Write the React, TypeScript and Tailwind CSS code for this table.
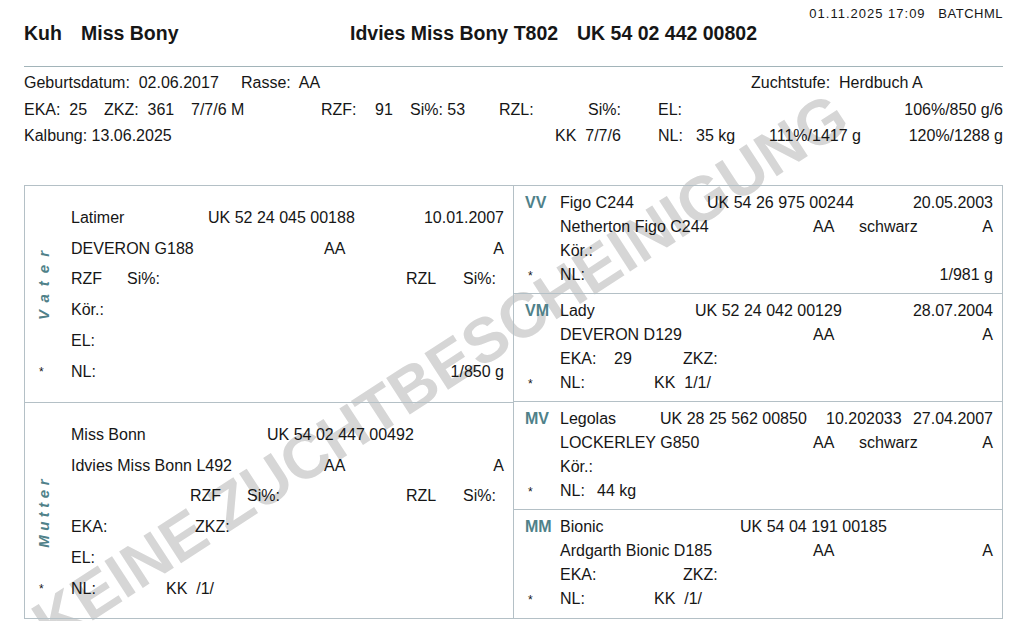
import React from "react";

const line = "border-[#b4c0c6]";

const SideLabel = ({ text, className }: { text: string; className: string }) => (
    <div className="row-span-4 row-start-2 flex items-center justify-center pr-[8px]">
        <span
            className={`[writing-mode:vertical-rl] rotate-180 font-bold italic text-[15px] text-[#4f8189] ${className}`}
        >
            {text}
        </span>
    </div>
);

const ParentBox = ({
    label,
    labelClass,
    rows,
}: {
    label: string;
    labelClass: string;
    rows: React.ReactNode[];
}) => (
    <div className="grid h-[216px] grid-cols-[46px_433px] auto-rows-[30.8px] pt-[17px]">
        <SideLabel text={label} className={labelClass} />
        {rows.map((row, i) => (
            <React.Fragment key={i}>
                {i === 5 && (
                    <div className="col-start-1 row-start-6 flex items-center pl-[14px] text-[12px]">*</div>
                )}
                <div
                    className="col-start-2 flex items-center"
                    style={{ gridRowStart: i + 1 }}
                >
                    {row}
                </div>
            </React.Fragment>
        ))}
    </div>
);

const AncestorBox = ({
    code,
    rows,
    last,
}: {
    code: string;
    rows: React.ReactNode[];
    last?: boolean;
}) => (
    <div className={`h-[108px] pt-[6px] ${last ? "" : `border-b ${line}`}`}>
        {rows.map((row, i) => (
            <div key={i} className="flex h-[23.8px] items-center">
                <div className="w-[46px] pl-[11px]">
                    {i === 0 ? (
                        <span className="font-bold text-[#4f8189]">{code}</span>
                    ) : i === 3 ? (
                        <span className="pl-[3px] text-[12px]">*</span>
                    ) : null}
                </div>
                <div className="flex w-[433px] items-center">{row}</div>
            </div>
        ))}
    </div>
);

export default function App() {
    return (
        <div className="relative h-[621px] w-[1024px] overflow-hidden bg-white pl-[24px] pr-[21px] font-['Liberation_Sans',Arial,sans-serif] text-[16px] text-[#161616] whitespace-pre">
            <div className="pointer-events-none absolute left-[440px] top-[369px] -translate-x-1/2 -translate-y-1/2 -rotate-[33deg] text-[63px] font-bold text-[#d6d6d6]">
                KEINE ZUCHTBESCHEINIGUNG
            </div>

            <div className="relative">
                {/* header */}
                <div className="flex h-[23px] items-end justify-end text-[13px] tracking-[1px]">
                    <span className="w-[129px]">01.11.2025 17:09</span>
                    <span className="tracking-[0.5px]">BATCHML</span>
                </div>
                <div className="flex h-[22px] items-center text-[19.5px] font-bold">
                    <span className="w-[57px]">Kuh</span>
                    <span className="w-[269px]">Miss Bony</span>
                    <span className="w-[227px]">Idvies Miss Bony T802</span>
                    <span>UK 54 02 442 00802</span>
                </div>
                <div className="mt-[21px] border-t border-[#a2b4b9]" />

                {/* info rows */}
                <div className="mt-[3px]">
                    <div className="flex h-[26.5px] items-center">
                        <span className="w-[217px]">Geburtsdatum:  02.06.2017</span>
                        <span className="w-[510px]">Rasse:  AA</span>
                        <span>Zuchtstufe:  Herdbuch A</span>
                    </div>
                    <div className="flex h-[26.5px] items-center">
                        <span className="w-[80px]">EKA:  25</span>
                        <span className="w-[87px]">ZKZ:  361</span>
                        <span className="w-[130px]">7/7/6 M</span>
                        <span className="w-[54px]">RZF:</span>
                        <span className="w-[35px]">91</span>
                        <span className="w-[89px]">Si%: 53</span>
                        <span className="flex w-[122px] justify-between">
                            <span>RZL:</span>
                            <span>Si%:</span>
                        </span>
                        <span className="w-[37px]" />
                        <span>EL:</span>
                        <span className="ml-auto">106%/850 g/6</span>
                    </div>
                    <div className="flex h-[26.5px] items-center">
                        <span className="w-[531px]">Kalbung: 13.06.2025</span>
                        <span className="w-[103px]">KK  7/7/6</span>
                        <span className="w-[38px]">NL:</span>
                        <span className="w-[73px]">35 kg</span>
                        <span>111%/1417 g</span>
                        <span className="ml-auto">120%/1288 g</span>
                    </div>
                </div>

                {/* pedigree */}
                <div className={`mt-[35px] flex h-[434px] border ${line}`}>
                    <div className={`w-[490px] border-r ${line}`}>
                        <div className={`border-b ${line}`}>
                            <ParentBox
                                label="Vater"
                                labelClass="tracking-[8px] -translate-y-[13px]"
                                rows={[
                                    <>
                                        <span className="w-[137px]">Latimer</span>
                                        <span>UK 52 24 045 00188</span>
                                        <span className="ml-auto">10.01.2007</span>
                                    </>,
                                    <>
                                        <span className="w-[253px]">DEVERON G188</span>
                                        <span>AA</span>
                                        <span className="ml-auto">A</span>
                                    </>,
                                    <>
                                        <span className="w-[56px]">RZF</span>
                                        <span className="w-[279px]">Si%:</span>
                                        <span className="w-[57px]">RZL</span>
                                        <span>Si%:</span>
                                    </>,
                                    <span>Kör.:</span>,
                                    <span>EL:</span>,
                                    <>
                                        <span>NL:</span>
                                        <span className="ml-auto">1/850 g</span>
                                    </>,
                                ]}
                            />
                        </div>
                        <ParentBox
                            label="Mutter"
                            labelClass="tracking-[4.5px]"
                            rows={[
                                <>
                                    <span className="w-[196px]">Miss Bonn</span>
                                    <span>UK 54 02 447 00492</span>
                                </>,
                                <>
                                    <span className="w-[253px]">Idvies Miss Bonn L492</span>
                                    <span>AA</span>
                                    <span className="ml-auto">A</span>
                                </>,
                                <>
                                    <span className="w-[119px]" />
                                    <span className="w-[57px]">RZF</span>
                                    <span className="w-[159px]">Si%:</span>
                                    <span className="w-[57px]">RZL</span>
                                    <span>Si%:</span>
                                </>,
                                <>
                                    <span className="w-[124px]">EKA:</span>
                                    <span>ZKZ:</span>
                                </>,
                                <span>EL:</span>,
                                <>
                                    <span className="w-[95px]">NL:</span>
                                    <span>KK  /1/</span>
                                </>,
                            ]}
                        />
                    </div>

                    <div className="w-[489px]">
                        <AncestorBox
                            code="VV"
                            rows={[
                                <>
                                    <span className="w-[147px]">Figo C244</span>
                                    <span>UK 54 26 975 00244</span>
                                    <span className="ml-auto">20.05.2003</span>
                                </>,
                                <>
                                    <span className="w-[253px]">Netherton Figo C244</span>
                                    <span className="w-[46px]">AA</span>
                                    <span>schwarz</span>
                                    <span className="ml-auto">A</span>
                                </>,
                                <span>Kör.:</span>,
                                <>
                                    <span>NL:</span>
                                    <span className="ml-auto">1/981 g</span>
                                </>,
                            ]}
                        />
                        <AncestorBox
                            code="VM"
                            rows={[
                                <>
                                    <span className="w-[135px]">Lady</span>
                                    <span>UK 52 24 042 00129</span>
                                    <span className="ml-auto">28.07.2004</span>
                                </>,
                                <>
                                    <span className="w-[253px]">DEVERON D129</span>
                                    <span>AA</span>
                                    <span className="ml-auto">A</span>
                                </>,
                                <>
                                    <span className="w-[54px]">EKA:</span>
                                    <span className="w-[69px]">29</span>
                                    <span>ZKZ:</span>
                                </>,
                                <>
                                    <span className="w-[94px]">NL:</span>
                                    <span>KK  1/1/</span>
                                </>,
                            ]}
                        />
                        <AncestorBox
                            code="MV"
                            rows={[
                                <>
                                    <span className="w-[100px]">Legolas</span>
                                    <span className="w-[166px]">UK 28 25 562 00850</span>
                                    <span>10.202033</span>
                                    <span className="ml-auto">27.04.2007</span>
                                </>,
                                <>
                                    <span className="w-[253px]">LOCKERLEY G850</span>
                                    <span className="w-[46px]">AA</span>
                                    <span>schwarz</span>
                                    <span className="ml-auto">A</span>
                                </>,
                                <span>Kör.:</span>,
                                <>
                                    <span className="w-[37px]">NL:</span>
                                    <span>44 kg</span>
                                </>,
                            ]}
                        />
                        <AncestorBox
                            code="MM"
                            last
                            rows={[
                                <>
                                    <span className="w-[180px]">Bionic</span>
                                    <span>UK 54 04 191 00185</span>
                                </>,
                                <>
                                    <span className="w-[253px]">Ardgarth Bionic D185</span>
                                    <span>AA</span>
                                    <span className="ml-auto">A</span>
                                </>,
                                <>
                                    <span className="w-[123px]">EKA:</span>
                                    <span>ZKZ:</span>
                                </>,
                                <>
                                    <span className="w-[94px]">NL:</span>
                                    <span>KK  /1/</span>
                                </>,
                            ]}
                        />
                    </div>
                </div>
            </div>
        </div>
    );
}
